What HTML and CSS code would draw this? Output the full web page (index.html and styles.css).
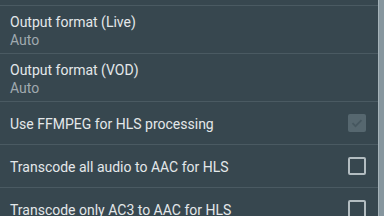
FILE: index.html
```html
<!DOCTYPE html>
<html lang="en">
<head>
    <meta charset="UTF-8">
    <meta name="viewport" content="width=device-width, initial-scale=1.0">
    <title>Transcoding settings</title>
    <link rel="stylesheet" href="styles.css">
</head>
<body>
    <div class="screen">
        <div class="prefs">
            <div class="pref-tail"></div>

            <div class="pref">
                <div class="pref-text">
                    <div class="pref-title">Output format (Live)</div>
                    <div class="pref-summary">Auto</div>
                </div>
            </div>

            <div class="pref">
                <div class="pref-text">
                    <div class="pref-title">Output format (VOD)</div>
                    <div class="pref-summary">Auto</div>
                </div>
            </div>

            <div class="pref pref-single">
                <div class="pref-text">
                    <div class="pref-title">Use FFMPEG for HLS processing</div>
                </div>
                <span class="checkbox checked disabled">
                    <svg viewBox="0 0 18 18" width="18" height="18">
                        <path d="M4.5 9.2l3 3 6-6" fill="none" stroke="#46575f" stroke-width="1.8"/>
                    </svg>
                </span>
            </div>

            <div class="pref pref-single">
                <div class="pref-text">
                    <div class="pref-title">Transcode all audio to AAC for HLS</div>
                </div>
                <span class="checkbox"></span>
            </div>

            <div class="pref pref-single">
                <div class="pref-text">
                    <div class="pref-title">Transcode only AC3 to AAC for HLS</div>
                </div>
                <span class="checkbox"></span>
            </div>
        </div>
        <div class="scrollbar"></div>
    </div>
</body>
</html>
```

FILE: styles.css
```css
html, body {
    margin: 0;
    padding: 0;
    background-color: #37474f;
}
body {
    font-family: Roboto, "Noto Sans", sans-serif;
    width: 384px;
    height: 216px;
    overflow: hidden;
}
.screen {
    display: flex;
    height: 216px;
}
.prefs {
    flex: 1;
    display: flex;
    flex-direction: column;
}
.pref-tail {
    height: 5px;
    flex-shrink: 0;
    border-bottom: 1px solid #4a5a62;
}
.pref {
    display: flex;
    align-items: center;
    flex-shrink: 0;
    height: 47px;
    padding-left: 10px;
    padding-right: 12px;
    border-bottom: 1px solid #4a5a62;
}
.pref-single {
    height: 42px;
}
.pref-text {
    flex: 1;
    padding-top: 2px;
}
.pref-single .pref-text {
    padding-top: 1px;
}
.pref-title {
    font-size: 14px;
    line-height: 18px;
    color: #e4e8ea;
}
.pref-summary {
    font-size: 14px;
    line-height: 18px;
    color: #a0aaaf;
}
.checkbox {
    box-sizing: border-box;
    width: 18px;
    height: 18px;
    border: 2px solid #b3bdc1;
    border-radius: 2px;
    display: flex;
    align-items: center;
    justify-content: center;
}
.checkbox.checked.disabled {
    border: none;
    background-color: #56676f;
}
.scrollbar {
    width: 5px;
    flex-shrink: 0;
    background-color: #86969e;
    border-left: 1px solid #a6b3b9;
}
```
